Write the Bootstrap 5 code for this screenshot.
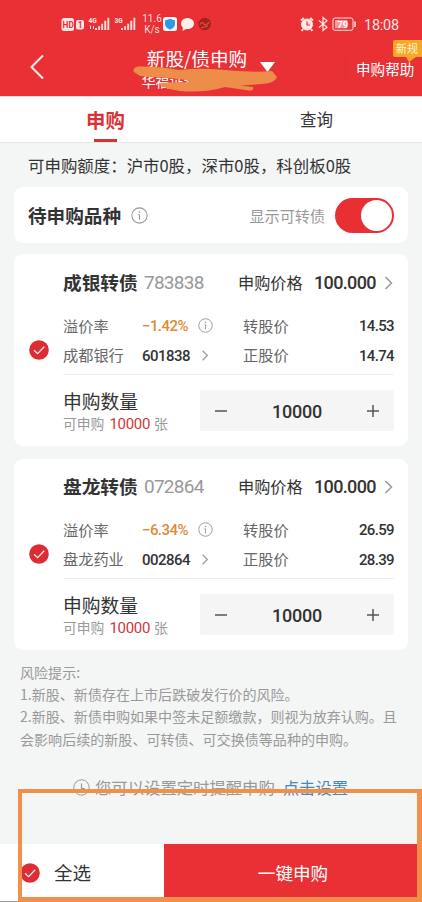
<!DOCTYPE html>
<html lang="zh-CN">
<head>
<meta charset="utf-8">
<meta name="viewport" content="width=device-width, initial-scale=1">
<title>新股/债申购</title>
<link href="https://cdn.jsdelivr.net/npm/bootstrap@5.3.0/dist/css/bootstrap.min.css" rel="stylesheet">
<style>
body{font-family:"Noto Sans CJK SC",sans-serif;background:#f4f5f5;color:#333;width:422px;height:902px;overflow:hidden;line-height:1.2}
svg{display:block;flex:none}
.app-top{height:96px;background:#e93034;color:#fff}
.status{height:48px;padding:0 23px 0 61px;font-family:Roboto,sans-serif}
.status .speed{font-size:10px;line-height:11px;width:20px;color:#ffdcdc}
.status .clock{color:#ffe4e4;width:35px;font-size:14.4px;letter-spacing:-.2px;padding-top:3px}
.title-bar{height:48px}
.title-bar .back{width:78px;padding-left:29px;height:38px}
.title-side{width:29px}
.title-text{font-size:18.6px;line-height:20px}
.sub-text{font-size:14px;line-height:20px;padding:3px 13px 0 0}
.help{width:77px;padding-left:10px;border-left:1px solid #dd2e32;height:24px;margin-top:9px;font-size:14.6px}
.flag{left:393px;top:40px;width:29px;height:17px;background:#f9a825;color:#fff6d8;font-size:11px;line-height:16px;padding-left:3px;border-radius:2px 0 0 2px}
.flag-tail{left:406px;top:57px}
.scribble{left:132px;top:62px}
.tabs{height:47px;background:#fff;border-bottom:1px solid #e3e4e4;border-top:1px solid #ffd5d2}
.tab-on{font-size:19.4px;font-weight:700;color:#dc3237}
.tab-on::after{content:"";position:absolute;left:94px;bottom:0;width:23px;height:3px;background:#cf343a}
.tab-off{font-size:16.5px}
.quota{height:44px;padding:2px 0 0 28px;font-size:16.45px;white-space:nowrap}
.panel{margin:0 14px;background:#fff;border-radius:9px}
.filter{height:56px;padding:0 14px}
.filter .name{font-size:18.6px;font-weight:700;width:103px}
.filter .hint{font-size:15.1px;color:#999}
.toggle{width:59px;height:35px;border-radius:18px;background:#e72f34;padding:2px;margin-left:10px}
.knob{width:31px;height:31px;border-radius:50%;background:#fff}
.bond{height:192px;margin-top:11px;padding-top:13px}
.bond + .bond{height:191px;margin-top:13px;padding-top:12px}
.pick{width:49px;margin-top:-13px}
.detail{padding-right:14px}
.head-row{height:32px;margin-bottom:12px}
.bond-name{font-size:18.7px;font-weight:700;width:81px;padding-bottom:2px}
.num{font-family:Roboto,sans-serif}
.code{font-size:19px;letter-spacing:-.75px;color:#999;width:94px}
.price-label{font-size:16.2px;width:76px}
.price{font-size:18px;letter-spacing:-.65px;font-weight:500;width:70px}
.info-row{height:29.5px;font-size:15.2px;color:#666}
.info-row > span{padding-bottom:2px}
.info-row > .num{padding:1px 0 0}
.info-row .k{width:79px}
.info-row .v{width:56px;font-size:15px;letter-spacing:-.55px;font-weight:500;color:#333}
.info-row .v.neg{color:#dd8b37}
.info-row > .ico{width:45px;padding:0}
.info-row .end{font-size:15px;letter-spacing:-.65px;font-weight:500;color:#333}
.rule{height:1px;background:#ededed;margin-top:4px}
.qty-row{padding-top:15px}
.qty-title{font-size:18.8px;line-height:22px}
.qty-sub{font-size:13.8px;line-height:22px;color:#999}
.qty-sub .num{font-size:15px;letter-spacing:-.3px;color:#cc3940;margin:0 4px 0 5px}
.stepper{width:194px;height:41px;background:#f5f5f5;padding:0 14px;border-radius:2px}
.stepper .num{font-size:18px;letter-spacing:-.2px;font-weight:500;padding-top:2px}
.risk{padding:11px 20px 0;font-size:14.05px;line-height:22.2px;color:#999;white-space:nowrap;height:124px}
.remind{height:70px;padding:1px 0 0 73px;font-size:16.35px;color:#999;line-height:24px}
.remind a{color:#4a87bd;text-decoration:none;font-size:16.3px;margin-left:8px}
.bottom{height:58px}
.all{width:164px;background:#fff;font-size:18.5px;padding-left:20px;border-bottom:1px solid #999}
.all span{margin-left:14px}
.submit{background:#e93034;color:#fff;font-size:17.6px;border:0;border-radius:0;padding:0}
.frame{left:18px;top:789px;width:404px;height:113px;border:5px solid #f19149;border-top-width:4px;border-left-width:4px}
</style>
</head>
<body class="position-relative">
<svg width="0" height="0" class="position-absolute">
<symbol id="info" viewBox="0 0 16 16"><circle cx="8" cy="8" r="7.2" fill="none" stroke="#999"/><path d="M8 7.2V12M6.8 7.2H8" stroke="#999" fill="none"/><circle cx="8" cy="4.8" r=".8" fill="#999"/></symbol>
<symbol id="check" viewBox="0 0 20 20"><circle cx="10" cy="10" r="9.8" fill="#de2c34"/><path d="M5 10.2L8.6 13.6L15.2 6.8" fill="none" stroke="#ffe9e9" stroke-width="1.3"/></symbol>
<symbol id="chev" viewBox="0 0 8 14"><path d="M1 1L7 7L1 13" fill="none" stroke="#999" stroke-width="1.5"/></symbol>
<symbol id="bars" viewBox="0 0 16 13"><path d="M1 13V11M4.2 13V9M7.4 13V6.5M10.6 13V3.5M13.8 13V0" stroke="#ffdcdc" stroke-width="2"/></symbol>
</svg>

<header class="app-top">
  <div class="status d-flex align-items-center">
    <svg width="81" height="20" viewBox="61 14 81 20" font-family="Roboto,sans-serif" font-weight="700">
      <rect x="61.5" y="18" width="12.5" height="13" rx="2.5" fill="#ffe4e2"/><text x="62.6" y="27.8" font-size="8.3" fill="#e93034">HD</text>
      <rect x="76" y="20" width="8" height="9.5" rx="2" fill="#ffe4e2"/><text x="77.8" y="28" font-size="8.5" fill="#e93034">1</text>
      <text x="88.5" y="23" font-size="6.5" fill="#ffe4e2">4G</text><path d="M90.5 29V25.5M93.5 26V29" stroke="#ffdcdc"/>
      <use href="#bars" x="95" y="17.5" width="15.500" height="12.5"/>
      <text x="114.5" y="23" font-size="6.5" fill="#ffe4e2">3G</text>
      <use href="#bars" x="121" y="17.5" width="15.500" height="12.5"/>
    </svg>
    <div class="speed text-center">11.6<br>K/s</div>
    <svg width="50" height="20" viewBox="162 14 50 20">
      <rect x="163" y="17" width="14" height="14" rx="2.5" fill="#fff3f3"/><path d="M170 18.7L175 20.4V24Q175 27.6 170 29.7Q165 27.6 165 24V20.4Z" fill="#2d9ae3"/>
      <ellipse cx="187.5" cy="23.5" rx="6.5" ry="5.6" fill="#fff0ef"/><path d="M183 26L182.5 31L188 28Z" fill="#fff0ef"/>
      <circle cx="204.7" cy="24" r="6.2" fill="#a91f21"/><path d="M200 24.5Q202 21 204 24T209 22M201 28L208 26" stroke="#e0503f" stroke-width="1.3" fill="none"/>
    </svg>
    <svg class="ms-auto me-2" width="56" height="20" viewBox="301 14 56 20" fill="none" stroke="#ffe4e2">
      <circle cx="308" cy="24.5" r="5.5" fill="#ffe9e8"/><path d="M302 20.5L304.8 18M311.2 18L314 20.5M304 29L302.7 31M312 29L313.3 31" stroke-width="2"/><path d="M308 21.5V25H311" stroke="#e93034" stroke-width="1.2"/>
      <path d="M320 20.5L328 27.3L324 30.5V17.5L328 20.7L320 27.5" stroke-width="1.2"/>
      <rect x="334" y="18" width="20" height="12.3" rx="2"/><rect x="336" y="20" width="12.5" height="8.3" fill="#f59a98" stroke="none"/><path d="M356 21.5V27" stroke-width="1.6"/><text x="338.2" y="27.8" font-size="9.5" font-weight="700" font-family="Roboto" fill="#fff" stroke="none">79</text>
    </svg>
    <div class="clock">18:08</div>
  </div>
  <div class="title-bar d-flex">
    <div class="back d-flex align-items-center"><svg width="16" height="26" viewBox="0 0 16 26"><path d="M14 1.5L2.5 13L14 24.5" fill="none" stroke="#ffe9e9" stroke-width="2.1"/></svg></div>
    <div class="flex-grow-1 text-center">
      <div class="title-text">新股/债申购</div>
      <div class="sub-text">华福证券&emsp;&emsp;&emsp;</div>
    </div>
    <div class="title-side flex-shrink-0"></div>
    <div class="help d-flex align-items-center text-nowrap">申购帮助</div>
  </div>
</header>
<svg class="scribble position-absolute" width="146" height="32" viewBox="132 62 146 32"><path d="M260 62H275L267.5 72Z" fill="#fff"/><path d="M134 72Q132 68 138 66.500Q160 66 179 70Q205 67.500 230 70.500Q255 72.500 272 71L277 77Q275 83 262 84Q252 85 240 85.500L253 87Q254 91 249 90.500L225 87Q205 93 180 91Q165 89 158 84Q165 82 190 82Q187 79.500 178 79Q155 77 140 76Z" fill="#ee8c49"/></svg>
<div class="flag position-absolute text-nowrap overflow-hidden">新规</div>
<svg class="flag-tail position-absolute" width="10" height="5"><path d="M0 0H10L3 5Z" fill="#f9a825"/></svg>

<nav class="tabs d-flex">
  <div class="tab-on w-50 position-relative d-flex align-items-center justify-content-center">申购</div>
  <div class="tab-off w-50 d-flex align-items-center justify-content-center">查询</div>
</nav>
<div class="quota d-flex align-items-center">可申购额度：沪市0股，深市0股，科创板0股</div>

<section class="panel filter d-flex align-items-center">
  <span class="name text-nowrap">待申购品种</span>
  <svg width="17" height="17"><use href="#info"/></svg>
  <span class="hint ms-auto">显示可转债</span>
  <div class="toggle d-flex justify-content-end"><div class="knob"></div></div>
</section>

<section class="panel bond d-flex">
  <div class="pick d-flex align-items-center justify-content-center"><svg width="20" height="20"><use href="#check"/></svg></div>
  <div class="detail flex-grow-1">
    <div class="head-row d-flex align-items-center text-nowrap"><span class="bond-name">成银转债</span><span class="code num">783838</span><span class="price-label">申购价格</span><span class="price num">100.000</span><svg width="9" height="14"><use href="#chev"/></svg></div>
    <div class="info-row d-flex align-items-center"><span class="k">溢价率</span><span class="v num neg">−1.42%</span><span class="ico"><svg width="15" height="15"><use href="#info"/></svg></span><span>转股价</span><span class="end num ms-auto">14.53</span></div>
    <div class="info-row d-flex align-items-center"><span class="k">成都银行</span><span class="v num">601838</span><span class="ico"><svg width="14" height="11"><use href="#chev"/></svg></span><span>正股价</span><span class="end num ms-auto">14.74</span></div>
    <div class="rule"></div>
    <div class="qty-row d-flex justify-content-between">
      <div><div class="qty-title">申购数量</div><div class="qty-sub">可申购<span class="num">10000</span>张</div></div>
      <div class="stepper d-flex align-items-center justify-content-between"><svg width="14" height="14"><path d="M1 7H13" stroke="#555" stroke-width="1.5"/></svg><span class="num">10000</span><svg width="14" height="14"><path d="M1 7H13M7 1V13" stroke="#555" stroke-width="1.5"/></svg></div>
    </div>
  </div>
</section>

<section class="panel bond d-flex">
  <div class="pick d-flex align-items-center justify-content-center"><svg width="20" height="20"><use href="#check"/></svg></div>
  <div class="detail flex-grow-1">
    <div class="head-row d-flex align-items-center text-nowrap"><span class="bond-name">盘龙转债</span><span class="code num">072864</span><span class="price-label">申购价格</span><span class="price num">100.000</span><svg width="9" height="14"><use href="#chev"/></svg></div>
    <div class="info-row d-flex align-items-center"><span class="k">溢价率</span><span class="v num neg">−6.34%</span><span class="ico"><svg width="15" height="15"><use href="#info"/></svg></span><span>转股价</span><span class="end num ms-auto">26.59</span></div>
    <div class="info-row d-flex align-items-center"><span class="k">盘龙药业</span><span class="v num">002864</span><span class="ico"><svg width="14" height="11"><use href="#chev"/></svg></span><span>正股价</span><span class="end num ms-auto">28.39</span></div>
    <div class="rule"></div>
    <div class="qty-row d-flex justify-content-between">
      <div><div class="qty-title">申购数量</div><div class="qty-sub">可申购<span class="num">10000</span>张</div></div>
      <div class="stepper d-flex align-items-center justify-content-between"><svg width="14" height="14"><path d="M1 7H13" stroke="#555" stroke-width="1.5"/></svg><span class="num">10000</span><svg width="14" height="14"><path d="M1 7H13M7 1V13" stroke="#555" stroke-width="1.5"/></svg></div>
    </div>
  </div>
</section>

<div class="risk">风险提示:<br>1.新股、新债存在上市后跌破发行价的风险。<br>2.新股、新债申购如果中签未足额缴款，则视为放弃认购。且<br>会影响后续的新股、可转债、可交换债等品种的申购。</div>
<div class="remind d-flex align-items-start text-nowrap"><svg class="mt-1" width="17" height="17" viewBox="0 0 17 17"><circle cx="8.500" cy="8.500" r="7.700" fill="none" stroke="#999"/><path d="M8.500 4.500V9.500H12" fill="none" stroke="#999" stroke-width="1.200"/></svg><span class="ps-1">&#8202;您可以设置定时提醒申购</span><a href="#">点击设置</a></div>

<footer class="bottom d-flex">
  <div class="all d-flex align-items-center"><svg width="20" height="20"><use href="#check"/></svg><span>全选</span></div>
  <button class="submit btn flex-grow-1">一键申购</button>
</footer>
<div class="frame position-absolute"></div>
</body>
</html>
